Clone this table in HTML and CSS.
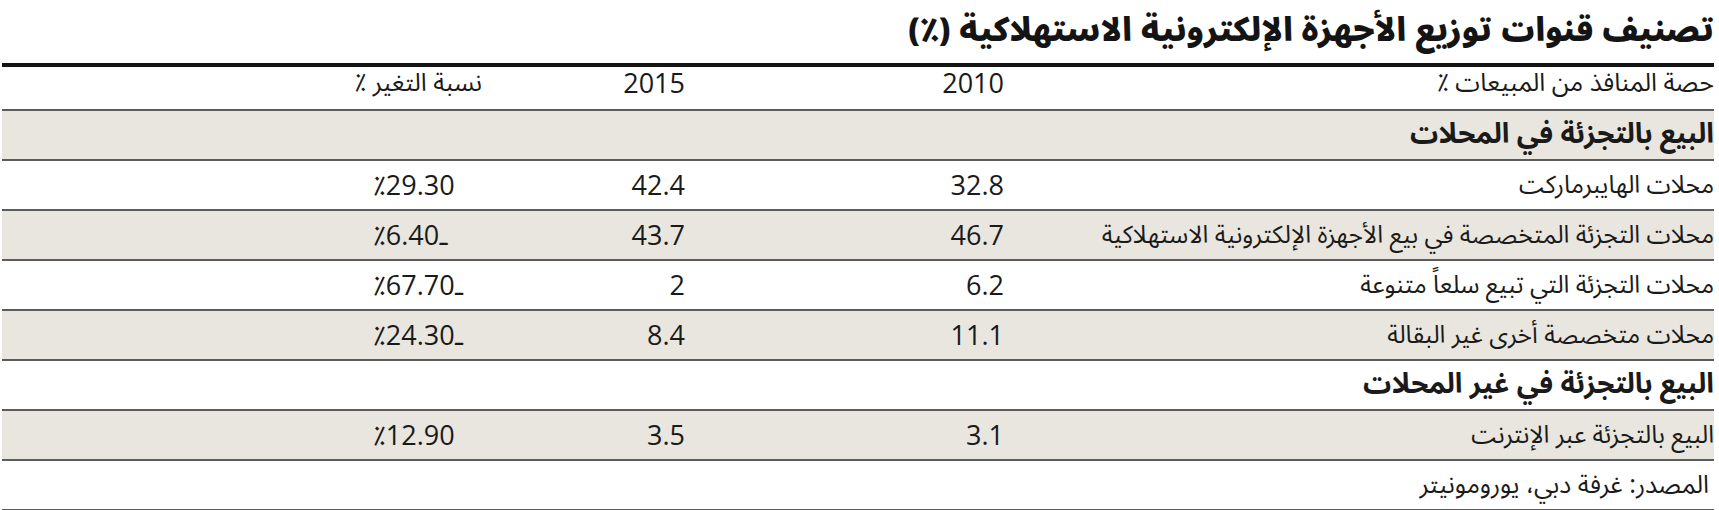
FILE: index.html
```html
<!DOCTYPE html>
<html lang="ar" dir="rtl">
<head>
<meta charset="utf-8">
<title>تصنيف قنوات توزيع الأجهزة الإلكترونية الاستهلاكية</title>
<link rel="stylesheet" href="styles.css">
</head>
<body>
<div class="chart">
  <h1 class="title">تصنيف قنوات توزيع الأجهزة الإلكترونية الاستهلاكية (٪)</h1>
  <div class="table">
    <div class="row head">
      <div class="label">حصة المنافذ من المبيعات ٪</div>
      <div class="num">2010</div>
      <div class="num">2015</div>
      <div class="chg-head">نسبة التغير ٪</div>
      <div></div>
    </div>
    <div class="row section alt">
      <div class="sec-label">البيع بالتجزئة في المحلات</div>
    </div>
    <div class="row">
      <div class="label">محلات الهايبرماركت</div>
      <div class="num">32.8</div>
      <div class="num">42.4</div>
      <div class="chg"><span dir="ltr">٪29.30</span></div>
      <div></div>
    </div>
    <div class="row alt">
      <div class="label">محلات التجزئة المتخصصة في بيع الأجهزة الإلكترونية الاستهلاكية</div>
      <div class="num">46.7</div>
      <div class="num">43.7</div>
      <div class="chg">ـ<span dir="ltr">٪6.40</span></div>
      <div></div>
    </div>
    <div class="row">
      <div class="label">محلات التجزئة التي تبيع سلعاً متنوعة</div>
      <div class="num">6.2</div>
      <div class="num">2</div>
      <div class="chg">ـ<span dir="ltr">٪67.70</span></div>
      <div></div>
    </div>
    <div class="row alt">
      <div class="label">محلات متخصصة أخرى غير البقالة</div>
      <div class="num">11.1</div>
      <div class="num">8.4</div>
      <div class="chg">ـ<span dir="ltr">٪24.30</span></div>
      <div></div>
    </div>
    <div class="row section">
      <div class="sec-label">البيع بالتجزئة في غير المحلات</div>
    </div>
    <div class="row alt">
      <div class="label">البيع بالتجزئة عبر الإنترنت</div>
      <div class="num">3.1</div>
      <div class="num">3.5</div>
      <div class="chg"><span dir="ltr">٪12.90</span></div>
      <div></div>
    </div>
    <div class="row foot">
      <div class="source">المصدر: غرفة دبي، يورومونيتر</div>
    </div>
  </div>
</div>
</body>
</html>
```
FILE: styles.css
```css
html, body {
  margin: 0;
  padding: 0;
  background: #ffffff;
}

body {
  color: #1a1a1a;
  font-family: "Noto Sans Arabic", "DejaVu Sans", sans-serif;
}

.chart {
  margin: 0 5px 0 2px;
}

.title {
  margin: 0;
  height: 63px;
  font-size: 32.5px;
  line-height: 62px;
  font-weight: 900;
  color: #141414;
  white-space: nowrap;
}

.table {
  border-top: 4px solid #151515;
}

.row {
  display: grid;
  grid-template-columns: 710px 319px 203px 109px 1fr;
  align-items: center;
  height: 50px;
  box-sizing: border-box;
  border-bottom: 2px solid #5b5b5b;
  font-size: 24.5px;
  white-space: nowrap;
}

.row.head {
  height: 44px;
  padding-bottom: 10px;
}

.row.alt {
  background: #e8e6de;
}

.row.section,
.row.foot {
  grid-template-columns: 1fr;
}

.label,
.sec-label,
.source,
.num,
.chg,
.chg-head {
  line-height: 30px;
}

.head .label,
.chg-head {
  font-size: 25px;
}

.sec-label {
  font-weight: 700;
  font-size: 28px;
}

.source {
  padding-right: 5px;
  font-size: 25px;
}

.num,
.chg {
  font-family: "Open Sans", "Noto Sans Arabic", sans-serif;
  font-size: 27px;
}

.num {
  text-align: start;
}

.chg {
  text-align: end;
}

.chg-head {
  text-align: start;
}
```
